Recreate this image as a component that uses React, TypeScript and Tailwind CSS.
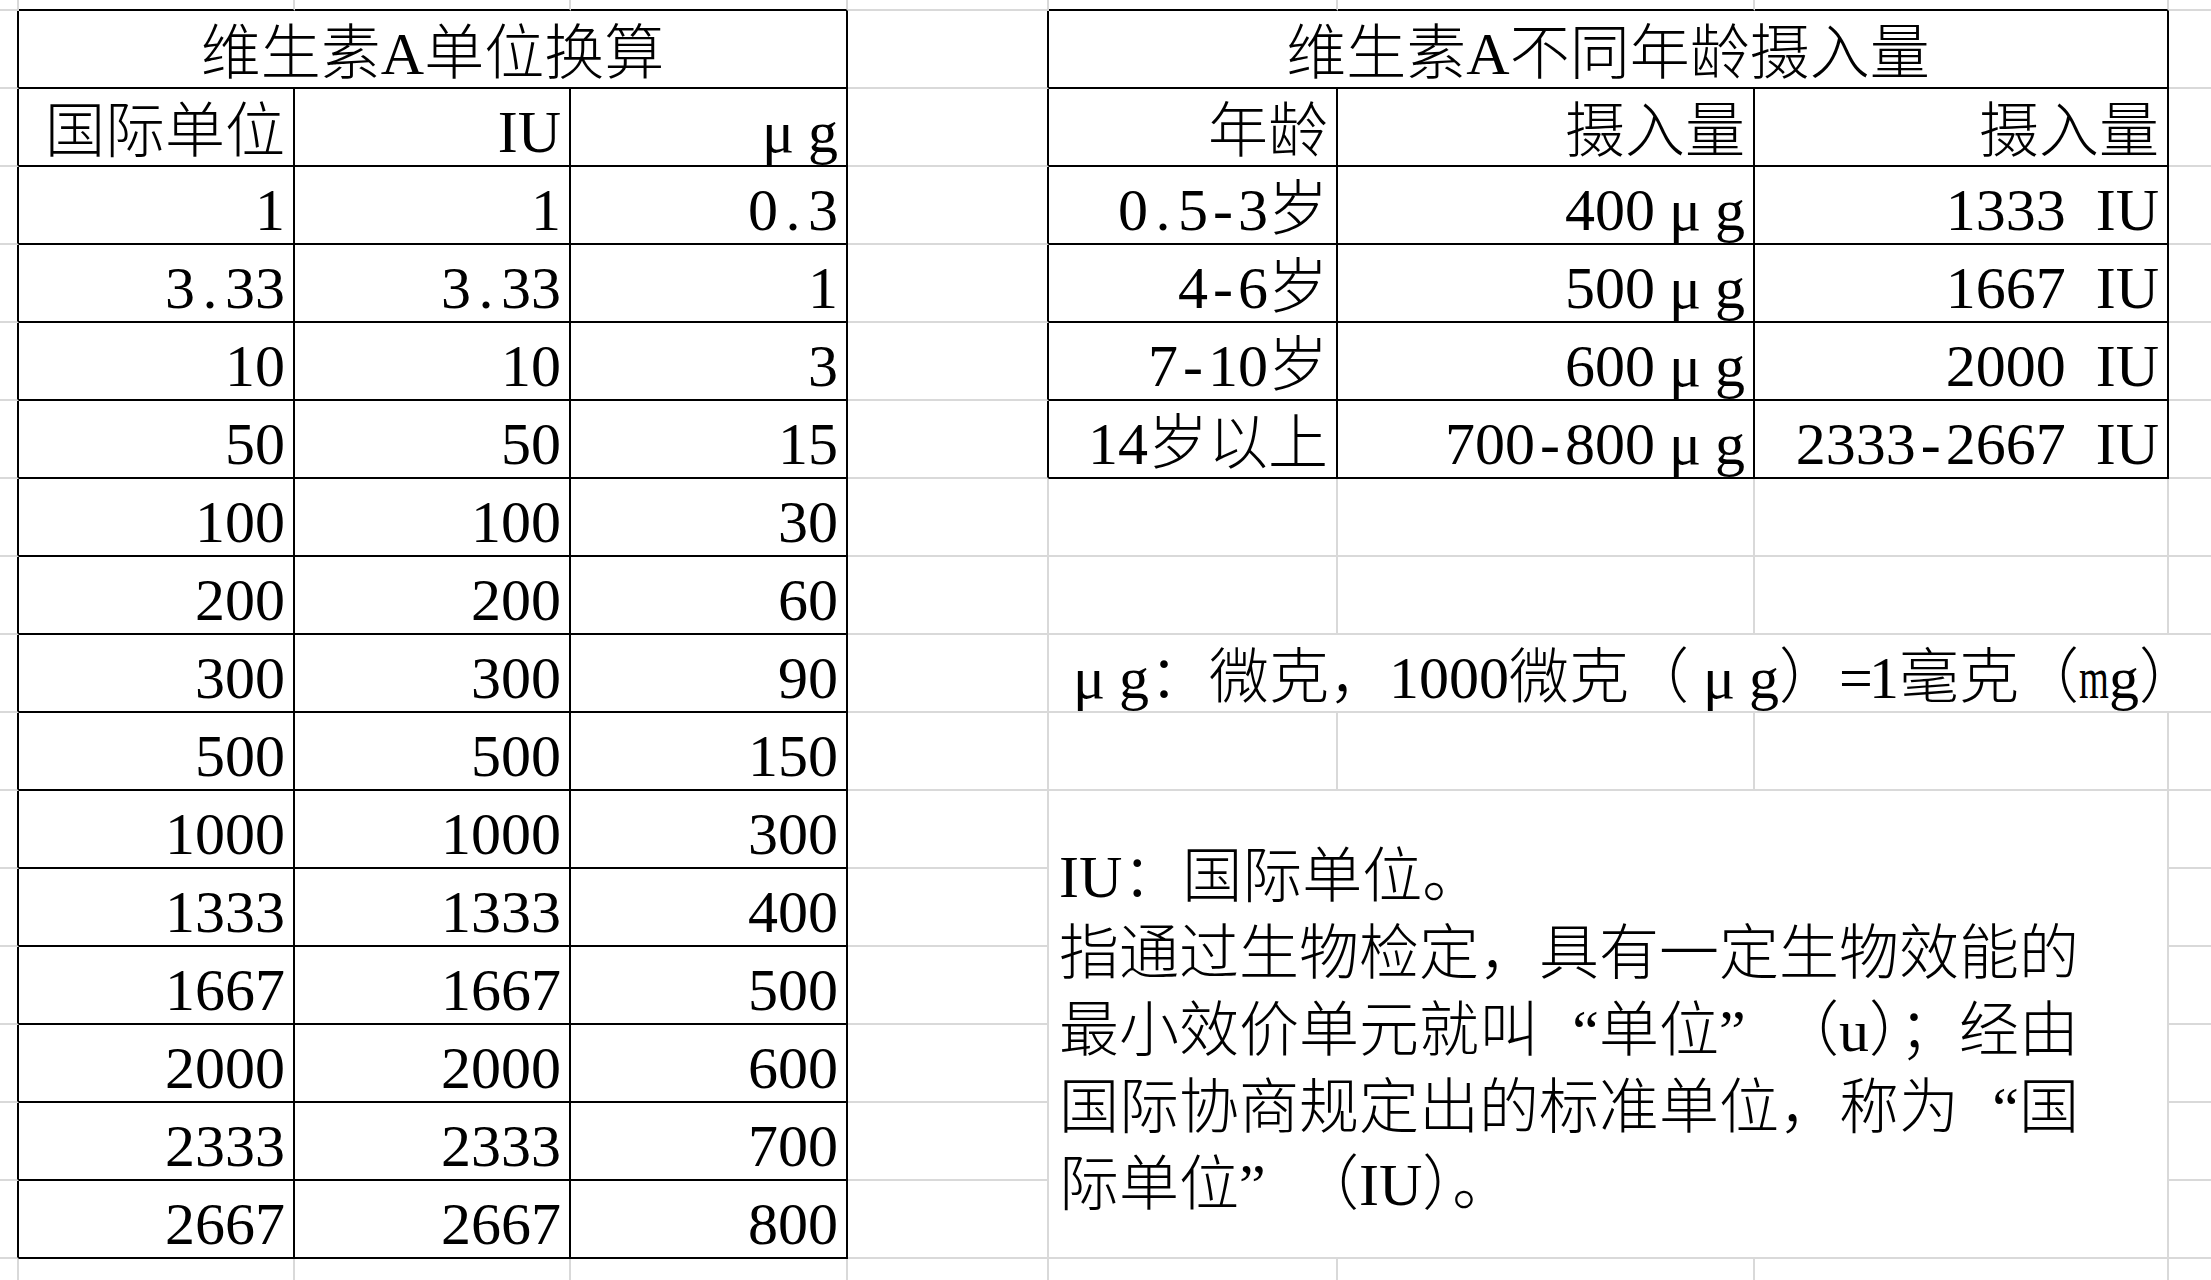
import React from "react";

// spreadsheet: 9 columns, 18 rows (first / last partially visible)
type Cell = {
  c: number;
  span?: number;
  rows?: number;
  text?: string;
  align?: "right" | "center" | "left";
  box?: boolean;
};

const leftData = [
  ["1", "1", "0.3"],
  ["3.33", "3.33", "1"],
  ["10", "10", "3"],
  ["50", "50", "15"],
  ["100", "100", "30"],
  ["200", "200", "60"],
  ["300", "300", "90"],
  ["500", "500", "150"],
  ["1000", "1000", "300"],
  ["1333", "1333", "400"],
  ["1667", "1667", "500"],
  ["2000", "2000", "600"],
  ["2333", "2333", "700"],
  ["2667", "2667", "800"],
];

const rightData = [
  ["0.5-3岁", "400μg", "1333 IU"],
  ["4-6岁", "500μg", "1667 IU"],
  ["7-10岁", "600μg", "2000 IU"],
  ["14岁以上", "700-800μg", "2333-2667 IU"],
];

const boxLines = [
  "IU：国际单位。",
  "指通过生物检定，具有一定生物效能的",
  "最小效价单元就叫“单位”（u）；经由",
  "国际协商规定出的标准单位，称为“国",
  "际单位”（IU）。",
];

function buildRows(): Cell[][] {
  const rows: Cell[][] = [];
  const empty = (from: number, to: number) => {
    const out: Cell[] = [];
    for (let c = from; c <= to; c++) out.push({ c });
    return out;
  };

  rows.push(empty(0, 8));
  rows.push([
    { c: 0 },
    { c: 1, span: 3, text: "维生素A单位换算", align: "center" },
    { c: 4 },
    { c: 5, span: 3, text: "维生素A不同年龄摄入量", align: "center" },
    { c: 8 },
  ]);
  rows.push([
    { c: 0 },
    { c: 1, text: "国际单位" },
    { c: 2, text: "IU" },
    { c: 3, text: "μg" },
    { c: 4 },
    { c: 5, text: "年龄" },
    { c: 6, text: "摄入量" },
    { c: 7, text: "摄入量" },
    { c: 8 },
  ]);

  leftData.forEach((l, i) => {
    const r = i + 3;
    const row: Cell[] = [
      { c: 0 },
      { c: 1, text: l[0] },
      { c: 2, text: l[1] },
      { c: 3, text: l[2] },
      { c: 4 },
    ];
    if (i < rightData.length) {
      const d = rightData[i];
      row.push({ c: 5, text: d[0] }, { c: 6, text: d[1] }, { c: 7, text: d[2] }, { c: 8 });
    } else if (r === 9) {
      row.push({ c: 5, span: 4, text: "μg：微克，1000微克（μg）=1毫克（mg）", align: "left" });
    } else if (r === 11) {
      row.push({ c: 5, span: 3, rows: 6, box: true }, { c: 8 });
    } else if (r > 11) {
      row.push({ c: 8 });
    } else {
      row.push(...empty(5, 8));
    }
    rows.push(row);
  });

  rows.push(empty(0, 8));
  return rows;
}

// table outlines are black, the rest is sheet gridlines
function blackRight(r: number, c: number) {
  return (r >= 1 && r <= 16 && c <= 3) || (r >= 1 && r <= 6 && c >= 4 && c <= 7);
}
function blackBottom(r: number, c: number) {
  return (c >= 1 && c <= 3 && r <= 16) || (c >= 5 && c <= 7 && r <= 6);
}

// SimSun-like fixed widths for a few glyphs
function Txt({ s }: { s: string }) {
  return (
    <>
      {s.split("").map((ch, i) => {
        if (ch === "μ")
          return (
            <span key={i} className="inline-block w-[60px] text-center">
              μ
            </span>
          );
        if (ch === "." || ch === "-" || ch === " " || ch === "=")
          return (
            <span key={i} className="inline-block w-[30px] text-center whitespace-pre">
              {ch}
            </span>
          );
        if (ch === "m")
          return (
            <span key={i} className="inline-block w-[30px]">
              <span className="inline-block scale-x-[0.64] origin-left">m</span>
            </span>
          );
        if (ch === "“")
          return (
            <span key={i} className="inline-block w-[60px] text-right">
              “
            </span>
          );
        if (ch === "”")
          return (
            <span key={i} className="inline-block w-[60px] text-left">
              ”
            </span>
          );
        return <React.Fragment key={i}>{ch}</React.Fragment>;
      })}
    </>
  );
}

export default function App() {
  const rows = buildRows();

  return (
    <div
      lang="zh-CN"
      className="w-[2211px] h-[1280px] overflow-hidden bg-white text-black font-['Liberation_Serif','Noto_Sans_CJK_SC',serif] font-light text-[60px] leading-none"
    >
      <div className="grid grid-cols-[19px_276px_276px_277px_201px_289px_417px_414px_100px] grid-rows-[11px_repeat(17,78px)]">
        {rows.map((row, r) =>
          row.map((cell) => {
            const lastC = cell.c + (cell.span ?? 1) - 1;
            const lastR = r + (cell.rows ?? 1) - 1;
            const rb = blackRight(lastR, lastC) ? "border-r-black" : "border-r-[#d9d9d9]";
            const bb = blackBottom(lastR, cell.c) ? "border-b-black" : "border-b-[#d9d9d9]";
            const span =
              cell.span === 3 ? "col-span-3" : cell.span === 4 ? "col-span-4" : "";
            const rspan = cell.rows === 6 ? "row-span-6" : "";

            if (cell.box) {
              return (
                <div
                  key={`${r}-${cell.c}`}
                  className={`flex flex-col justify-center pl-[10px] pt-[14px] border-r-2 border-b-2 ${rb} ${bb} ${span} ${rspan}`}
                >
                  {boxLines.map((l, i) => (
                    <div key={i} className="leading-[77px] whitespace-nowrap">
                      <Txt s={l} />
                    </div>
                  ))}
                </div>
              );
            }

            const align =
              cell.align === "center"
                ? "justify-center"
                : cell.align === "left"
                ? "justify-start pl-[10px]"
                : "justify-end pr-[8px]";

            return (
              <div
                key={`${r}-${cell.c}`}
                className={`flex items-end pb-[3px] whitespace-nowrap border-r-2 border-b-2 ${rb} ${bb} ${span} ${align}`}
              >
                {cell.text && (
                  <span>
                    <Txt s={cell.text} />
                  </span>
                )}
              </div>
            );
          })
        )}
      </div>
    </div>
  );
}
